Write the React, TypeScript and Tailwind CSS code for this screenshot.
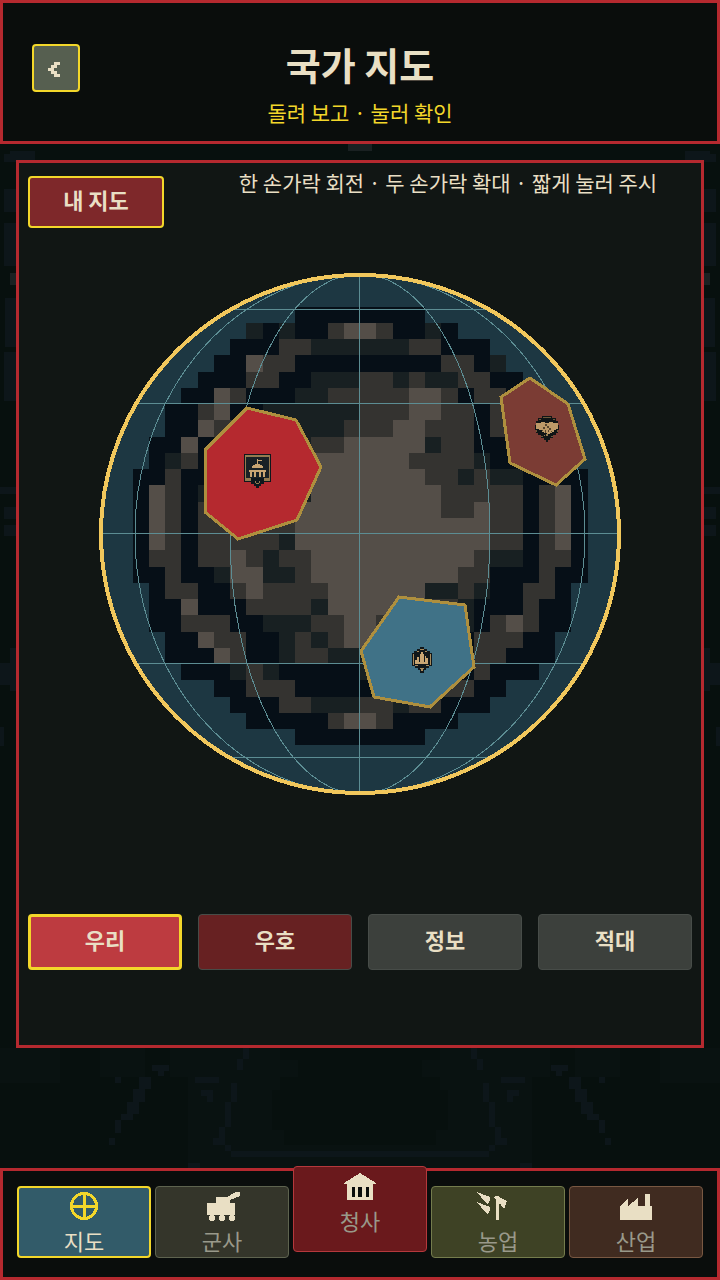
import { useState } from "react";
import type { ReactNode } from "react";

// N = deep sea, D = shore, G = lowland, B = highland, "." = open water
const TERRAIN = [
  "............NNNNNNNN............",
  ".........DNDNNGBBGNNDN..........",
  "........NNNGGDDDDDDGGNNN........",
  ".......NNBGGNNNNNNNNNGGND.......",
  "......NNNGGNNDDDGGDGDDGGNN......",
  ".....NNBGNNNDDGGGGGBBGNGGNN.....",
  "....NNGBNNDDDDDDGGGBBGGNGNNN....",
  "....NNBGGNDDDDDGGGBBGGGNGNNN....",
  "...NNBNDDDDDDGGBBBBBDGGNNNNNN...",
  "...NDGNDDDDDDBBBBBBGGGGDNNNNN...",
  "..NNGNNDDDDDDBBBBBBBGGDGDDNNNN..",
  "..NBGNDDDDDDDBBBBBBBBGGGGGNGBN..",
  "..NBGNGGGGGGBBBBBBBBBGGBGGNGBN..",
  "..NBGNGGGGGGBBBBBBBBBBBBGGNGBN..",
  "..NBGNGGGGGDBBBBBBBBBBBBGGNGBN..",
  "..NGGNGGBGDGGBBBBBBBBBBGDDNGGN..",
  "..NNGNNDBBDDGBBBBBBBBBGGNNNGNN..",
  "...NGGNNGBGGGGBBBBBBDDGDNNGGN...",
  "...NNBNNNGGGGDBBBBBBGGDNNNGNN...",
  "...NNGGGNNDDDGGBBGGGGGDNGBGNN...",
  "....NNBGGNNDGDGBBGGGGGNGGGNN....",
  "....NNNBGNNDGGDDDDDDDDNGGNNN....",
  ".....NNNDGDNNNNNDNNNNNNGNNN.....",
  ".......NNGGGNNNNNNNNNGGNN.......",
  "........NNNGGDDDGGDGGNNN........",
  ".........NNNNNGBBGNNNN..........",
  "............NNNNNNNN............",
];

const TERRAIN_COLORS: Record<string, string> = { N: "#060f17", D: "#182022", G: "#343330", B: "#544e48" };
const CELL = 16.25;

// [x, y, width, height], each one is repeated on the other side of the screen
const BACKDROP = [
  [10, 151, 25, 9], [4, 154, 12, 8], [4, 189, 12, 23], [4, 223, 12, 43], [5, 298, 11, 49], [4, 352, 12, 49],
  [0, 487, 16, 7], [4, 507, 12, 12], [4, 525, 12, 11], [10, 648, 6, 43], [0, 663, 16, 22], [0, 727, 4, 19],
  [243, 1048, 6, 11], [237, 1059, 6, 11], [152, 1065, 17, 6], [158, 1071, 6, 5], [139, 1077, 12, 12],
  [133, 1089, 12, 13], [127, 1102, 12, 12], [121, 1114, 12, 6], [115, 1120, 6, 13], [109, 1138, 6, 7],
  [195, 1077, 24, 6], [201, 1090, 12, 6], [207, 1096, 6, 6], [231, 1083, 6, 19], [225, 1102, 6, 25],
  [219, 1127, 6, 11], [213, 1138, 12, 7], [225, 1145, 6, 6], [231, 1151, 129, 6], [188, 1163, 12, 5],
  [115, 1077, 6, 6],
];

function Backdrop() {
  return (
    <svg className="absolute inset-0 w-full h-full" viewBox="0 0 720 1280" preserveAspectRatio="xMidYMid slice"
      shapeRendering="crispEdges" aria-hidden="true">
      <rect y="1048" width="60" height="35" fill="#091211" />
      <rect x="660" y="1048" width="60" height="35" fill="#091211" />
      <rect x="100" y="1048" width="45" height="29" fill="#091211" />
      <rect x="575" y="1048" width="45" height="29" fill="#091211" />
      <path d="M170 1048H280V1060H298V1077H280V1090H272V1130H284V1145H436V1130H448V1090H440V1077H422V1060H440V1048H550V1077H532V1168H188V1077H170Z" fill="#091211" />
      {BACKDROP.map(([x, y, w, h], i) => (
        <g key={i} fill="#0d161a">
          <rect x={x} y={y} width={w} height={h} />
          <rect x={720 - x - w} y={y} width={w} height={h} />
        </g>
      ))}
      <path d="M348 144H372V151H348ZM10 273H16V285H10ZM704 273H710V285H704Z" fill="#1a2122" />
    </svg>
  );
}

function HallMarker() {
  return (
    <g>
      <path d="M244 454H271V482H264V484H261V486H259V488H256V486H254V484H251V482H244Z" fill="#0f171c" />
      <path d="M245 455H270V481H245Z" fill="#937b50" />
      <path d="M246 457H269V478H246Z" fill="#192125" />
      <path d="M251 478H264V482H251Z" fill="#0f171c" />
      <path d="M255 481H256V483H255ZM259 481H260V483H259ZM256 483H259V484H256Z" fill="#937b50" />
      <path d="M257 459H258V460H262V461H258V464H260V465H262V466H263V468H252V466H253V465H255V464H257Z" fill="#c9a673" />
      <path d="M249 470H266V472H265V477H263V472H261V477H259V472H256V477H254V472H252V477H250V472H249Z" fill="#c9a673" />
    </g>
  );
}

function AllyMarker() {
  return (
    <g>
      <path d="M542 416H552V418H556V421H558V425H559V430H558V433H556V435H553V438H550V440H548V442H546V440H544V438H541V435H538V433H536V430H535V425H536V421H538V418H542Z" fill="#101516" />
      <path d="M543 417H551V418H543ZM539 419H541V420H539ZM553 419H555V420H553ZM536 430H537V432H536ZM557 430H558V432H557ZM541 436H543V437H541ZM551 436H553V437H551Z" fill="#6d5939" />
      <path d="M536 423H541V422H545V423H549V422H553V423H558V429H556V430H554V432H552V433H550V434H547V433H544V432H542V430H539V429H536Z" fill="#bd9a68" />
      <path d="M545 424H547V426H545ZM547 426H549V428H547ZM549 428H551V430H549ZM543 427H545V429H543ZM542 430H543V431H542ZM545 430H546V433H545ZM548 430H549V432H548ZM551 431H552V432H551Z" fill="#59472e" />
      <path d="M546 434H548V436H546ZM544 435H545V436H544Z" fill="#937b50" />
    </g>
  );
}

function CityMarker() {
  return (
    <g>
      <path d="M420 647H424V649H427V651H430V653H432V666H429V668H426V670H424V673H420V670H418V668H415V666H412V653H414V651H417V649H420Z" fill="#10171a" />
      <path d="M420 649H424V650H420ZM417 651H419V652H417ZM425 651H427V652H425ZM413 654H414V665H413ZM430 654H431V665H430ZM415 665H418V666H415ZM426 665H429V666H426ZM420 668H424V669H423V671H421V669H420Z" fill="#a78a5c" />
      <path d="M415 664V660H417V657H419V662H420V654H421V652H423V654H424V662H425V656H426V658H428V664Z" fill="#c9a673" />
    </g>
  );
}

function Globe() {
  return (
    <svg className="w-[524px] max-w-full mx-auto mt-11 mb-10" viewBox="98 272 524 524" shapeRendering="crispEdges"
      role="img" aria-label="국가 지도">
      <defs>
        <clipPath id="sphere">
          <circle cx="360" cy="534" r="259" />
        </clipPath>
      </defs>
      <circle cx="360" cy="534" r="259" fill="#1d3742" />
      {TERRAIN.map((row, r) =>
        Array.from(row.matchAll(/N+|D+|G+|B+/g)).map((run) => (
          <rect key={`${r}-${run.index}`} x={100 + run.index! * CELL} y={274 + (r + 2) * CELL}
            width={run[0].length * CELL} height={CELL} fill={TERRAIN_COLORS[run[0][0]]} />
        ))
      )}
      <g clipPath="url(#sphere)" fill="none" stroke="#5c8d93">
        <path d="M100 309.5H620M100 403.5H620M100 533.5H620M100 663.5H620M100 757.5H620M359.5 274V794" />
        <ellipse cx="360" cy="534" rx="130" ry="260" />
        <ellipse cx="360" cy="534" rx="225" ry="260" />
      </g>
      <circle cx="360" cy="534" r="259" fill="none" stroke="#f1c75c" strokeWidth="4" />
      <g stroke="#ae8f3e" strokeWidth="3">
        <polygon points="247,408 296,420 321,467 297,520 238,539 205,512 205,450" fill="#b5292f" />
        <polygon points="530,378 568,404 585,459 556,485 510,463 501,397" fill="#7b3c34" />
        <polygon points="399,597 465,605 474,667 430,707 374,697 361,651" fill="#407287" />
      </g>
      <HallMarker />
      <AllyMarker />
      <CityMarker />
    </svg>
  );
}

const filters = [
  { id: "us", label: "우리", color: "bg-[#bd3b40]" },
  { id: "friendly", label: "우호", color: "bg-[#672122]" },
  { id: "intel", label: "정보", color: "bg-[#3c403c]" },
  { id: "hostile", label: "적대", color: "bg-[#3c403c]" },
];

type Tab = { id: string; label: string; style: string; icon: ReactNode };

const tabs: Tab[] = [
  {
    id: "map",
    label: "지도",
    style: "h-[72px] bg-[#325b69] border-[#587d88]",
    icon: <path d="M22 4V28M10 16H34M22 3.5A12.5 12.5 0 1 1 22 28.5A12.5 12.5 0 1 1 22 3.5Z" fill="none" stroke="#f3d72a" strokeWidth="3" />,
  },
  {
    id: "army",
    label: "군사",
    style: "h-[72px] bg-[#34352a] border-[#5e634f]",
    icon: (
      <>
        <path d="M7 13H16V7H27L36 2H40V6L30 10V13H35V25H7Z" />
        <circle cx="12" cy="28" r="3" />
        <circle cx="22" cy="28" r="3" />
        <circle cx="32" cy="28" r="3" />
      </>
    ),
  },
  {
    id: "hall",
    label: "청사",
    style: "h-[86px] -mt-5 bg-[#6a191c] border-[#b5383c]",
    icon: (
      <>
        <path d="M22 3L38 13V14H35V30H9V14H6V13Z" />
        <path d="M14 17H17V27H14ZM20 17H24V27H20ZM28 17H31V27H28Z" fill="#0a0d0c" />
      </>
    ),
  },
  {
    id: "farm",
    label: "농업",
    style: "h-[72px] bg-[#3e4225] border-[#747c4d]",
    icon: <path d="M1 2L14 7V10L12 14L9 12ZM1 12L14 17V20L12 24L9 22ZM20 6H23V7L31 11L28 19L26 17L25 14H23V30H20V9L17 7Z" />,
  },
  {
    id: "industry",
    label: "산업",
    style: "h-[72px] bg-[#402b20] border-[#795842]",
    icon: <path d="M6 16L14 9V16L24 8V16H31V4H36V16H38V30H6Z" />,
  },
];

export default function App() {
  const [filter, setFilter] = useState("us");
  const [tab, setTab] = useState("map");

  return (
    <div className="relative min-h-screen flex flex-col bg-[#07100e] text-[#e9dfc4] font-['Noto_Sans_CJK_KR',sans-serif]">
      <Backdrop />

      <header className="relative grid grid-cols-[48px_1fr_48px] border-3 border-[#b5292f] bg-[#0a0d0c] px-[29px] pt-[41px] pb-px text-center">
        <button type="button" aria-label="뒤로"
          className="w-12 h-12 rounded border-2 border-[#f3d72a] bg-[#565f50] flex items-center justify-center">
          <svg className="w-3 h-4 mt-1 -ml-1" viewBox="0 0 12 16" fill="currentColor" shapeRendering="crispEdges" aria-hidden="true">
            <path d="M6 0H12V3H9V6H6V9H9V12H12V15H6V12H3V9H0V6H3V3H6Z" />
          </svg>
        </button>
        <div>
          <h1 className="text-[38px] leading-10 font-bold">국가 지도</h1>
          <p className="text-[21px] leading-14 text-[#f3d72a]">돌려 보고 · 눌러 확인</p>
        </div>
      </header>

      <main className="relative flex-1 flex flex-col mx-4 mt-4 mb-[120px] border-3 border-[#b5292f] bg-[#111614] px-[9px] pt-[13px] pb-[75px]">
        <div className="flex items-start gap-10">
          <button type="button" className="w-[136px] h-[52px] shrink-0 rounded border-2 border-[#f3d72a] bg-[#7e282a] text-[22px] leading-6 font-bold pb-1.5">
            내 지도
          </button>
          <p className="flex-1 text-center text-[21px] leading-3">한 손가락 회전 · 두 손가락 확대 · 짧게 눌러 주시</p>
        </div>

        <Globe />

        <div className="mt-auto grid grid-cols-4 gap-4">
          {filters.map((f) => (
            <button key={f.id} type="button" aria-pressed={filter === f.id} onClick={() => setFilter(f.id)}
              className={`h-14 rounded text-[22px] leading-6 font-bold pb-1.5 ${f.color} ${filter === f.id ? "border-3 border-[#f3d72a]" : "border border-[#474c48]"}`}>
              {f.label}
            </button>
          ))}
        </div>
      </main>

      <nav className="relative grid grid-cols-5 gap-1 border-3 border-[#b5292f] bg-[#0a0d0c] px-[14px] pt-[15px] pb-[19px]">
        {tabs.map((t) => (
          <button key={t.id} type="button" aria-current={tab === t.id ? "page" : undefined} onClick={() => setTab(t.id)}
            className={`flex flex-col items-center rounded ${t.style} ${tab === t.id ? "border-2 border-[#f3d72a]! pt-[2px]" : "border pt-[3px]"}`}>
            <svg className="w-11 h-8 shrink-0" viewBox="0 0 44 32" fill="#e9dfc4" shapeRendering="crispEdges" aria-hidden="true">
              {t.icon}
            </svg>
            <span className={`text-[22px] leading-9 ${tab === t.id ? "text-[#e9dfc4]" : "text-[#99998a]"}`}>{t.label}</span>
          </button>
        ))}
      </nav>
    </div>
  );
}
